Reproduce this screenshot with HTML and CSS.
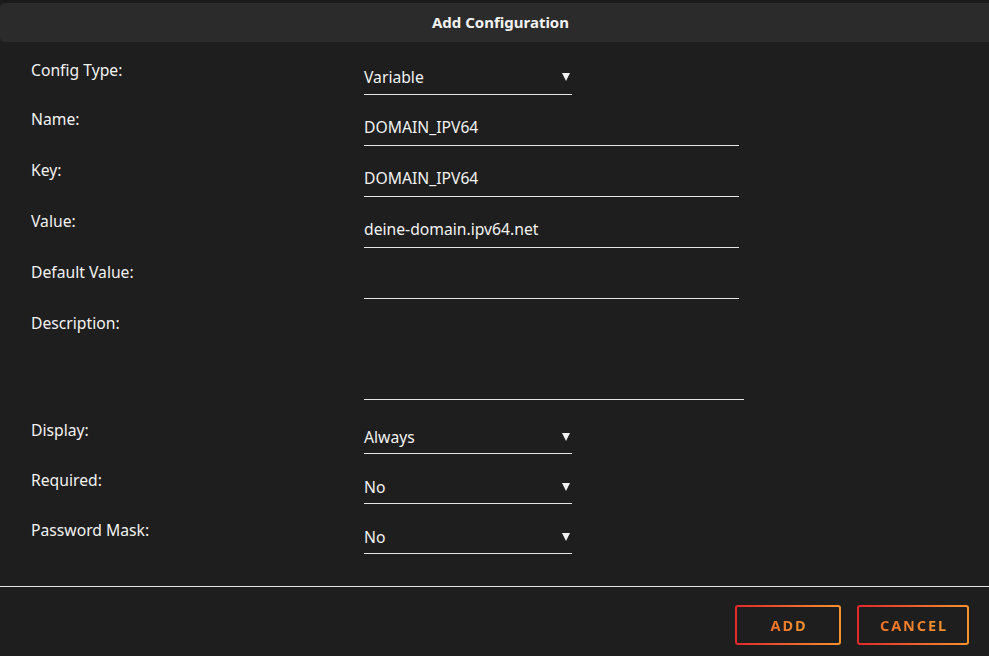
FILE: index.html
```html
<!DOCTYPE html>
<html lang="en">
<head>
    <meta charset="UTF-8">
    <title>Add Configuration</title>
    <link rel="stylesheet" href="styles.css">
</head>
<body>
    <div class="dialog">
        <div class="dialog-header">Add Configuration</div>

        <div class="config-form">
            <div class="form-row first-row">
                <label class="form-label">Config Type:</label>
                <div class="field select-field">Variable<span class="caret"></span></div>
            </div>
            <div class="form-row">
                <label class="form-label">Name:</label>
                <div class="field text-field">DOMAIN_IPV64</div>
            </div>
            <div class="form-row">
                <label class="form-label">Key:</label>
                <div class="field text-field">DOMAIN_IPV64</div>
            </div>
            <div class="form-row">
                <label class="form-label">Value:</label>
                <div class="field text-field">deine-domain.ipv64.net</div>
            </div>
            <div class="form-row">
                <label class="form-label">Default Value:</label>
                <div class="field text-field"></div>
            </div>
            <div class="form-row desc-row">
                <label class="form-label">Description:</label>
                <div class="field area-field"></div>
            </div>
            <div class="form-row select-row">
                <label class="form-label">Display:</label>
                <div class="field select-field">Always<span class="caret"></span></div>
            </div>
            <div class="form-row select-row">
                <label class="form-label">Required:</label>
                <div class="field select-field">No<span class="caret"></span></div>
            </div>
            <div class="form-row select-row">
                <label class="form-label">Password Mask:</label>
                <div class="field select-field">No<span class="caret"></span></div>
            </div>
        </div>

        <div class="dialog-footer">
            <button class="btn btn-add"><span>ADD</span></button>
            <button class="btn btn-cancel"><span>CANCEL</span></button>
        </div>
    </div>
</body>
</html>
```

FILE: styles.css
```css
:root {
    --bg-color: #1e1e1e;
    --header-color: #2b2b2b;
    --text-color: #f2f2f2;
    --line-color: #e6e6e6;
    --red: #e2292b;
    --orange: #f7932f;
}

* {
    margin: 0;
    padding: 0;
    box-sizing: border-box;
}

body {
    font-family: 'Noto Sans', 'Open Sans', sans-serif;
    background-color: var(--bg-color);
    color: var(--text-color);
    font-size: 15.7px;
    overflow: hidden;
}

.dialog {
    border-top: 3px solid #1a1a1a;
    height: 656px;
    display: flex;
    flex-direction: column;
}

.dialog-header {
    background-color: var(--header-color);
    height: 39px;
    line-height: 39px;
    text-align: center;
    font-weight: 700;
    font-size: 15px;
    border-radius: 5px 0 0 5px;
    margin-right: -12px;
}

.config-form {
    padding: 18px 0 0 31px;
    display: flex;
    flex-direction: column;
    gap: 15px;
    flex: 1;
}

.form-row {
    display: flex;
    align-items: flex-start;
}

.form-label {
    width: 333px;
    line-height: 20px;
    flex-shrink: 0;
    margin-top: -1px;
}

.first-row .form-label {
    margin-top: 0;
}

.field {
    line-height: 20px;
    border-bottom: 1px solid var(--line-color);
    padding: 7px 0 8px 0;
    height: 36px;
}

.first-row .field {
    padding-bottom: 7px;
    height: 35px;
}

.text-field {
    width: 375px;
}

.select-field {
    width: 208px;
    display: flex;
    justify-content: space-between;
    align-items: center;
    padding-right: 2px;
}

.caret {
    width: 0;
    height: 0;
    border-left: 4px solid transparent;
    border-right: 4px solid transparent;
    border-top: 8px solid var(--text-color);
}

.area-field {
    width: 380px;
    height: 86px;
}

.desc-row {
    margin-bottom: 5px;
}

.select-row {
    margin-bottom: 1px;
}

.select-row .form-label {
    margin-top: 0;
}

.select-row .field {
    padding: 7px 2px 6px 0;
    height: 34px;
}

.dialog-footer {
    border-top: 1px solid var(--line-color);
    display: flex;
    justify-content: flex-end;
    gap: 16px;
    padding: 18px 20px 11px 0;
    height: 70px;
}

.btn {
    height: 40px;
    flex-shrink: 0;
    border: 2px solid transparent;
    border-radius: 3px;
    background: linear-gradient(var(--bg-color), var(--bg-color)) padding-box,
                linear-gradient(90deg, var(--red), var(--orange)) border-box;
    font-family: 'Noto Sans', 'Open Sans', sans-serif;
    font-weight: 700;
    font-size: 14.5px;
    letter-spacing: 1.9px;
    cursor: pointer;
}

.btn span {
    background: linear-gradient(90deg, #f0702a, #f7952f);
    -webkit-background-clip: text;
    background-clip: text;
    color: transparent;
    padding-left: 2px;
}

.btn-add {
    width: 106px;
}

.btn-cancel {
    width: 112px;
}
```
